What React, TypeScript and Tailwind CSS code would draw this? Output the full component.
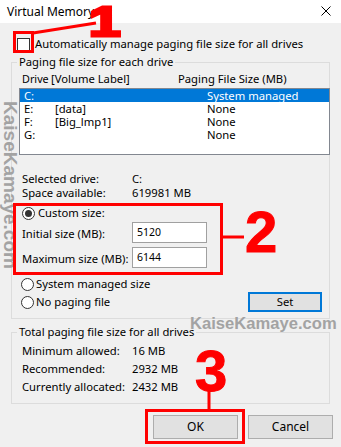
import React from "react";

const Radio = ({ checked }: { checked?: boolean }) => (
  <span className="w-[13px] h-[13px] rounded-full border border-[#333] bg-white flex items-center justify-center shrink-0">
    {checked && <span className="w-[7px] h-[7px] rounded-full bg-[#333]" />}
  </span>
);

export default function App() {
  const rows = [
    { d: "C:", l: "", s: "System managed", sel: true },
    { d: "E:", l: "[data]", s: "None" },
    { d: "F:", l: "[Big_lmp1]", s: "None" },
    { d: "G:", l: "", s: "None" },
  ];
  return (
    <div className="relative w-[341px] h-[447px] overflow-hidden bg-[#f0f0f0] text-black text-[11.25px] whitespace-nowrap font-['Noto_Sans',sans-serif] leading-none">
      {/* Title bar */}
      <div className="h-[23px] bg-white flex items-center justify-between pl-[7px] pr-[10px]">
        <span className="text-[12px]">Virtual Memory</span>
        <svg width="10" height="10" viewBox="0 0 10 10" className="mb-[2px]">
          <path d="M0.5 0.5 L9.5 9.5 M9.5 0.5 L0.5 9.5" stroke="#000" strokeWidth="1" />
        </svg>
      </div>

      <div className="px-[11px]">
        {/* Auto manage */}
        <div className="mt-[13px] h-[16px] flex items-center pl-[6px]">
          <span className="w-[13px] h-[13px] border border-[#333] bg-white shrink-0" />
          <span className="ml-[5px]">Automatically manage paging file size for all drives</span>
        </div>

        {/* Group 1 */}
        <fieldset className="mt-[2px] border border-[#dcdcdc] p-0 min-w-0">
          <legend className="ml-[5px] px-[2px] h-[16px] leading-[16px]">Paging file size for each drive</legend>
          <div className="pl-[7px]">
            <div className="mt-[1px] h-[16px] flex items-center pl-[3px]">
              <span className="w-[29px] text-[10.8px]">Drive</span>
              <span className="w-[127px]">[Volume Label]</span>
              <span>Paging File Size (MB)</span>
            </div>
            <div className="mt-[1px] h-[67px] border border-[#828790] bg-white -mr-px">
              {rows.map((r) => (
                <div
                  key={r.d}
                  className={`h-[13px] leading-[13px] flex items-center pl-[4px] ${r.sel ? "bg-[#0078d7] text-white" : ""}`}
                >
                  <span className="w-[31px]">{r.d}</span>
                  <span className="w-[152px]">{r.l}</span>
                  <span>{r.s}</span>
                </div>
              ))}
            </div>

            <div className="mt-[17px] h-[14px] flex items-center pl-[3px]">
              <span className="w-[110px]">Selected drive:</span>
              <span>C:</span>
            </div>
            <div className="h-[14px] flex items-center pl-[3px]">
              <span className="w-[110px]">Space available:</span>
              <span>619981 MB</span>
            </div>

            <div className="mt-[5px] h-[16px] flex items-center pl-[3px] gap-[3px]">
              <Radio checked />
              <span>Custom size:</span>
            </div>
            <div className="mt-[1px] h-[21px] flex items-center pl-[3px]">
              <span className="w-[110px] pt-[3px]">Initial size (MB):</span>
              <span className="w-[75px] h-[21px] border border-[#a0a0a0] bg-white pl-[4px] pt-[4px] text-[10.5px]">5120</span>
            </div>
            <div className="mt-[4px] h-[21px] flex items-center pl-[3px]">
              <span className="w-[110px] pt-[3px]">Maximum size (MB):</span>
              <span className="w-[75px] h-[21px] border border-[#a0a0a0] bg-white pl-[4px] pt-[4px] text-[10.5px]">6144</span>
            </div>

            <div className="mt-[8px] h-[16px] flex items-center pl-[2px] gap-[2px]">
              <Radio />
              <span>System managed size</span>
            </div>
            <div className="h-[20px] flex items-center justify-between pl-[2px] pr-[7px]">
              <div className="flex items-center gap-[2px]">
                <Radio />
                <span>No paging file</span>
              </div>
              <button className="w-[74px] h-[20px] border border-[#0078d7] shadow-[inset_0_0_0_1px_#0078d7] bg-[#e1e1e1] flex items-center justify-center">
                Set
              </button>
            </div>
            <div className="h-[6px]" />
          </div>
        </fieldset>

        {/* Group 2 */}
        <fieldset className="mt-[5px] border border-[#dcdcdc] p-0 min-w-0">
          <legend className="ml-[5px] px-[2px] h-[16px] leading-[16px]">Total paging file size for all drives</legend>
          <div className="pl-[10px] mt-[2px]">
            <div className="h-[18px] flex items-center">
              <span className="w-[110px]">Minimum allowed:</span>
              <span>16 MB</span>
            </div>
            <div className="h-[18px] flex items-center">
              <span className="w-[110px]">Recommended:</span>
              <span>2932 MB</span>
            </div>
            <div className="h-[18px] flex items-center">
              <span className="w-[110px]">Currently allocated:</span>
              <span>2432 MB</span>
            </div>
            <div className="h-[7px]" />
          </div>
        </fieldset>

        <div className="mt-[11px] flex justify-end gap-[10px] -mr-[3px]">
          <button className="w-[85px] h-[24px] border border-[#adadad] bg-[#e1e1e1] flex items-center justify-center text-[12px]">OK</button>
          <button className="w-[85px] h-[24px] border border-[#adadad] bg-[#e1e1e1] flex items-center justify-center text-[12px]">Cancel</button>
        </div>
      </div>

      {/* Watermarks */}
      <div className="absolute left-[1px] top-[101px] text-[19px] font-bold leading-none text-[#a3a3a3] font-['Liberation_Sans',sans-serif] [writing-mode:vertical-rl]">
        KaiseKamaye.com
      </div>
      <div className="absolute left-[190px] top-[316px] text-[16.6px] font-bold leading-none text-[#a3a3a3] font-['Liberation_Sans',sans-serif]">
        KaiseKamaye.com
      </div>

      {/* Annotations */}
      <div className="absolute left-[13px] top-[31px] w-[21px] h-[22px] border-[3px] border-[#ff0000]" />
      <div className="absolute left-[13px] top-[203px] w-[210px] h-[72px] border-[3px] border-[#ff0000]" />
      <div className="absolute left-[145px] top-[409px] w-[100px] h-[35px] border-[3px] border-[#ff0000]" />
      <svg className="absolute left-0 top-0" width="341" height="447">
        <path d="M33 33 L96 23" stroke="#ff0000" strokeWidth="3" />
        <path d="M222 237 L244 237" stroke="#ff0000" strokeWidth="3" />
        <path d="M209 390 L209 410" stroke="#ff0000" strokeWidth="3" />
      </svg>
      <div className="absolute left-[89px] top-[4px] text-[42px] leading-[36px] font-bold text-[#ff0000] font-['Liberation_Sans',sans-serif] [-webkit-text-stroke:3px_#ff0000] scale-x-[1.35] origin-left">
        1
      </div>
      <div className="absolute left-[245px] top-[203px] text-[58px] font-bold leading-none text-[#ff0000] font-['Liberation_Sans',sans-serif] [-webkit-text-stroke:1px_#ff0000]">
        2
      </div>
      <div className="absolute left-[195px] top-[342px] text-[58px] font-bold leading-none text-[#ff0000] font-['Liberation_Sans',sans-serif] [-webkit-text-stroke:1px_#ff0000]">
        3
      </div>
    </div>
  );
}
